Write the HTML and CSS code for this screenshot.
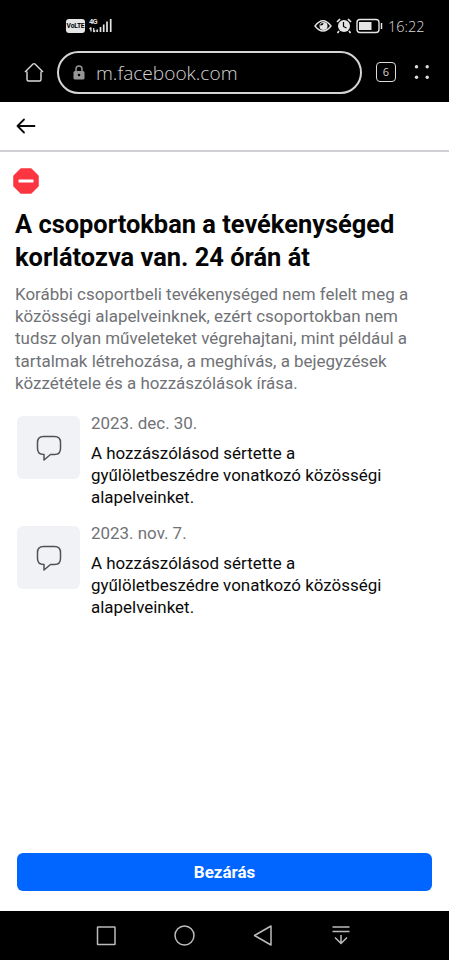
FILE: index.html
```
<!DOCTYPE html>
<html lang="hu">
<head>
<meta charset="utf-8">
<title>Facebook</title>
<link rel="stylesheet" href="styles.css">
</head>
<body>
<div class="status">
  <span class="volte">VoLTE</span>
  <div class="network"><span>4G</span>
    <svg width="23" height="15" viewBox="0 0 23 15"><path d="M2 9.500v4M4.700 10v4M.5 11L2 9.500M4.700 14L6.200 12.500" stroke="#e5e5e5" stroke-width="1.200" fill="none"/><path d="M8.200 14v-2.500M11.500 14V9M14.700 14V6.500M18 14V3.500M21.700 14V1" stroke="#e5e5e5" stroke-width="1.700"/></svg>
  </div>
  <svg class="eye" width="18" height="14" viewBox="0 0 18 14"><path d="M1 7Q9-3.500 17 7Q9 17 1 7z" fill="none" stroke="#e5e5e5" stroke-width="1.400"/><circle cx="9.500" cy="7" r="4" fill="#e5e5e5"/><path d="M6 6.500Q6.500 4 9.500 4Q9.500 6.500 6 6.500z" fill="#000"/></svg>
  <svg class="alarm" width="16" height="16" viewBox="0 0 16 16"><circle cx="8" cy="8" r="6" fill="#e5e5e5"/><path d="M1 4l3-3M12 1l3 3M3 13l-1.500 2M13 13l1.500 2" stroke="#e5e5e5" stroke-width="1.700"/><path d="M7.500 4v4.500l3 1.500" stroke="#000" stroke-width="1.200" fill="none"/></svg>
  <svg class="battery" width="27" height="16" viewBox="0 0 27 16"><rect x="1" y="1.500" width="22" height="13" rx="3" fill="none" stroke="#e5e5e5" stroke-width="1.400"/><rect x="3" y="4" width="12.500" height="8" fill="#e5e5e5"/><path d="M25.500 5v6" stroke="#e5e5e5" stroke-width="1.500"/></svg>
  <time>16:22</time>
</div>
<div class="toolbar">
  <svg class="home" width="20" height="21" viewBox="0 0 20 21"><path d="M1 10L9 2Q10 1.200 11 2L19 10M3 9.500V17.500Q3 19 4.500 19H15.500Q17 19 17 17.500V9.500" fill="none" stroke="#ddd" stroke-width="1.400"/></svg>
  <div class="address">
    <svg width="12" height="15" viewBox="0 0 12 15"><path d="M3 6V4a3 3 0 0 1 6 0v2" fill="none" stroke="#969696" stroke-width="1.500"/><rect x=".5" y="6" width="11" height="8.500" rx="1.500" fill="#969696"/><circle cx="6" cy="10" r="1.300" fill="#000"/></svg>
    <span>m.facebook.com</span>
  </div>
  <span class="tabs">6</span>
  <svg class="more" width="16" height="16" viewBox="0 0 16 16" fill="#ddd"><circle cx="2.500" cy="2.700" r="1.700"/><circle cx="13.200" cy="2.700" r="1.700"/><circle cx="2.500" cy="13.200" r="1.700"/><circle cx="13.200" cy="13.200" r="1.700"/></svg>
</div>
<header>
  <svg width="20" height="16" viewBox="0 0 20 16"><path d="M8 1.500L1.500 8L8 14.500M1.500 8H18.500" fill="none" stroke="#0a0a0a" stroke-width="1.800" stroke-linecap="round" stroke-linejoin="round"/></svg>
</header>
<main>
  <svg class="stop" width="26" height="26" viewBox="0 0 26 26"><path d="M8 1H18L25 8V18L18 25H8L1 18V8z" fill="#fb3640" stroke="#fb3640" stroke-width="1.500" stroke-linejoin="round"/><rect x="5.500" y="11.500" width="15" height="3" rx=".5" fill="#fff"/></svg>
  <h1>A csoportokban a tevékenységed<br>korlátozva van. 24 órán át</h1>
  <p class="intro">Korábbi csoportbeli tevékenységed nem felelt meg a<br>közösségi alapelveinknek, ezért csoportokban nem<br>tudsz olyan műveleteket végrehajtani, mint például a<br>tartalmak létrehozása, a meghívás, a bejegyzések<br>közzététele és a hozzászólások írása.</p>
  <article>
    <div class="thumb"><svg width="26" height="26" viewBox="0 0 26 26"><path d="M7.500 1.500H18.500Q24.500 1.500 24.500 7.500V13.500Q24.500 19.500 18.500 19.500H14.500L8 25V19.500Q1.500 19.500 1.500 13.500V7.500Q1.500 1.500 7.500 1.500z" fill="none" stroke="#505155" stroke-width="1.500" stroke-linejoin="round"/></svg></div>
    <div><time class="date">2023. dec. 30.</time><p>A hozzászólásod sértette a<br>gyűlöletbeszédre vonatkozó közösségi<br>alapelveinket.</p></div>
  </article>
  <article>
    <div class="thumb"><svg width="26" height="26" viewBox="0 0 26 26"><path d="M7.500 1.500H18.500Q24.500 1.500 24.500 7.500V13.500Q24.500 19.500 18.500 19.500H14.500L8 25V19.500Q1.500 19.500 1.500 13.500V7.500Q1.500 1.500 7.500 1.500z" fill="none" stroke="#505155" stroke-width="1.500" stroke-linejoin="round"/></svg></div>
    <div><time class="date">2023. nov. 7.</time><p>A hozzászólásod sértette a<br>gyűlöletbeszédre vonatkozó közösségi<br>alapelveinket.</p></div>
  </article>
  <button>Bezárás</button>
</main>
<nav>
  <svg width="22" height="22" viewBox="0 0 22 22"><rect x="2.500" y="2" width="17.500" height="17.500" rx=".5"/></svg>
  <svg width="22" height="22" viewBox="0 0 22 22"><circle cx="11.500" cy="10.500" r="9.500"/></svg>
  <svg width="22" height="22" viewBox="0 0 22 22"><path d="M19 1V20L2.500 10.500z" stroke-linejoin="round"/></svg>
  <svg width="22" height="22" viewBox="0 0 22 22"><path d="M2.500 2H19.500M2.500 6.500H19.500M11 10V18.500M5 12.500L11 18.500L17 12.500"/></svg>
</nav>
</body>
</html>
```

FILE: styles.css
```
* { box-sizing: border-box; }
body { margin: 0; width: 449px; height: 960px; display: flex; flex-direction: column; background: #fff; font-family: Roboto, sans-serif; white-space: nowrap; overflow: hidden; }
svg { display: block; flex: none; }
h1, p { margin: 0; }
.status { height: 44px; flex: none; background: #000; color: #ddd; display: flex; align-items: center; padding: 8px 0 0 66px; }
.volte { width: 19px; height: 14px; border-radius: 3px; background: #e5e5e5; color: #000; font: bold 6.7px/14px Roboto, sans-serif; letter-spacing: -.2px; text-align: center; flex: none; }
.network { width: 24px; height: 16px; margin-left: 4px; position: relative; }
.network span { position: absolute; left: 0; top: 0; font: bold 7.5px/8px Roboto, sans-serif; letter-spacing: -.8px; }
.eye { margin-left: 201px; }
.alarm { margin-left: 4px; }
.battery { margin-left: 4px; }
.status time { margin-left: 5px; font: 300 14.5px/20px "Open Sans", sans-serif; padding-top: 1px; }
.toolbar { height: 58px; flex: none; background: #000; color: #d5d5d5; display: flex; align-items: center; padding: 0 18px 2px 24px; }
.address { width: 305px; height: 43px; margin-left: 13px; border: 2px solid #d5d5d5; border-radius: 22px; display: flex; align-items: center; padding-left: 14px; }
.address span { margin: 2px 0 0 11px; font: 300 19.1px/24px "Open Sans", sans-serif; }
.tabs { width: 20px; height: 20px; margin-left: 14px; border: 1.5px solid #ddd; border-radius: 4px; font: 11px/18px "Open Sans", sans-serif; text-align: center; flex: none; }
.more { margin-left: 18px; }
header { height: 50px; flex: none; border-bottom: 2px solid #ced0d3; display: flex; align-items: center; padding: 0 0 1px 16px; }
main { flex: 1; display: flex; flex-direction: column; padding: 16px 17px 20px 15px; }
.stop { margin-left: -2px; }
h1 { margin-top: 13.5px; font-size: 25.43px; line-height: 33.5px; font-weight: 700; color: #050505; }
.intro { margin: 8.4px 0 22.1px; font-size: 16.95px; line-height: 22.2px; color: #707276; }
article { height: 88px; margin-bottom: 22px; padding-left: 2px; display: flex; gap: 11px; }
.thumb { width: 63px; height: 63px; border-radius: 6px; background: #f0f2f6; display: flex; align-items: center; justify-content: center; flex: none; }
.date { display: block; margin-top: -4px; font-size: 16.95px; line-height: 22px; color: #707276; }
article p { margin-top: 8px; font-size: 16.95px; line-height: 22.2px; color: #0a0a0a; }
button { height: 38px; margin: auto 0 0 2px; padding: 0; border: 0; border-radius: 6px; background: #0165ff; color: #fff; font: 700 16.95px/38px Roboto, sans-serif; }
nav { height: 49px; flex: none; background: #000; display: flex; gap: 56.3px; padding: 14px 0 0 95px; fill: none; stroke: #bcbcbc; stroke-width: 1.5; }
```
